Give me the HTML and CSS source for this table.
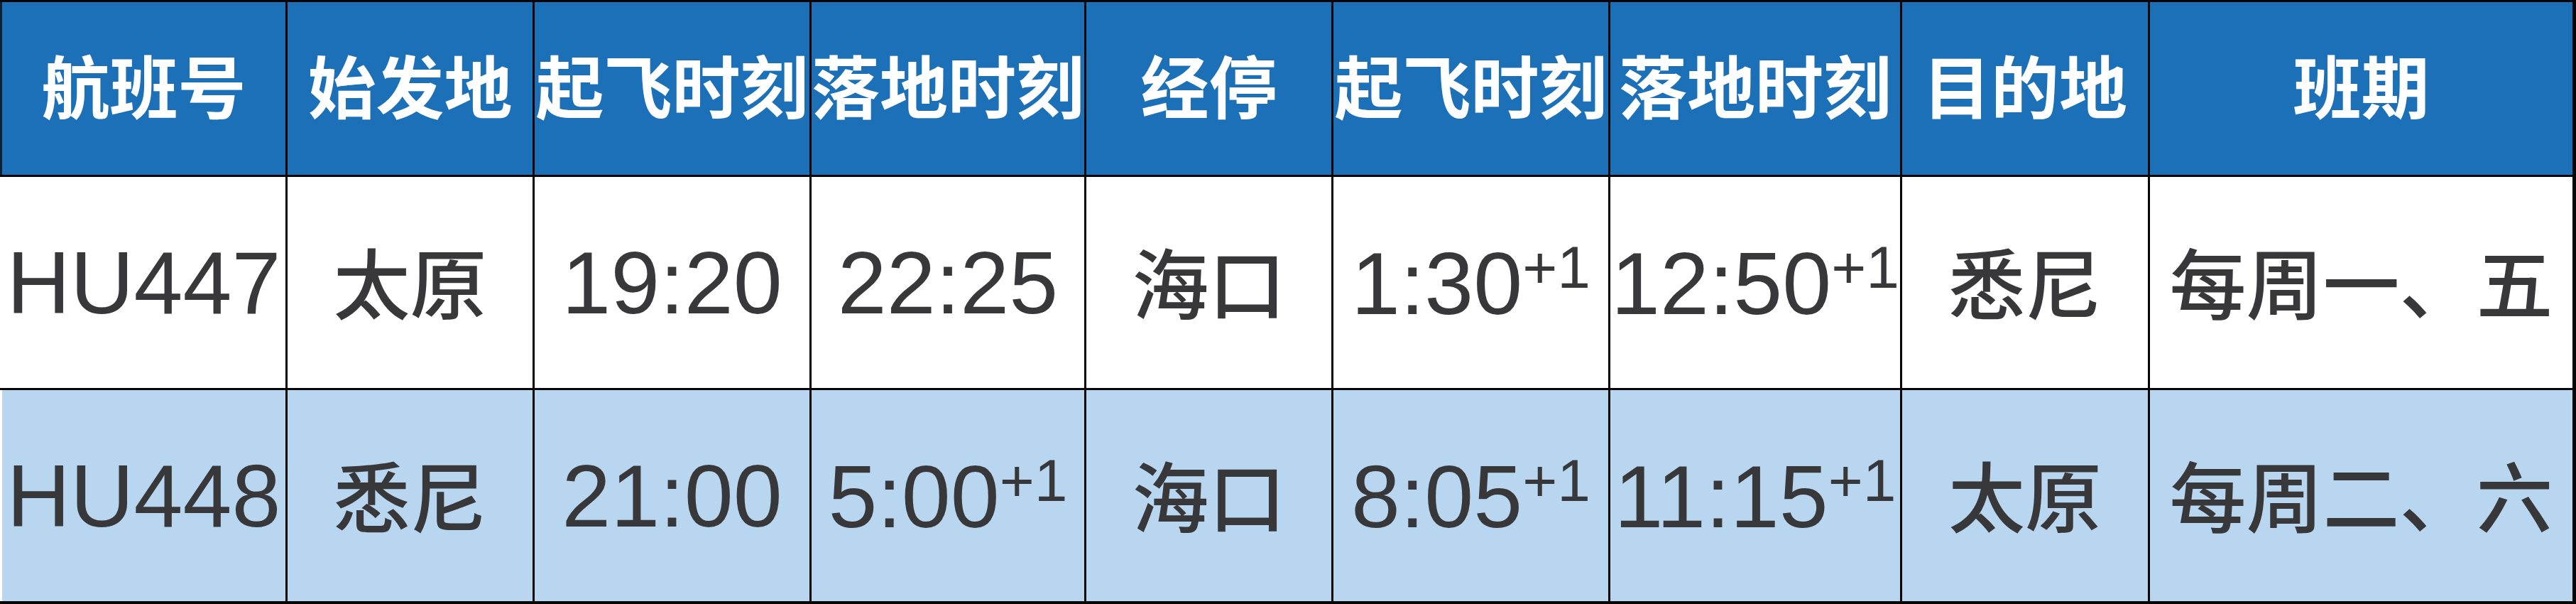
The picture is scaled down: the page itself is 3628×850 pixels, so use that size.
FILE: index.html
```html
<!DOCTYPE html>
<html lang="zh-CN">
<head>
<meta charset="utf-8">
<title>航班时刻表</title>
<link rel="stylesheet" href="styles.css">
</head>
<body>
<div class="schedule">
  <div class="cell head lead">航班号</div>
  <div class="cell head">始发地</div>
  <div class="cell head">起飞时刻</div>
  <div class="cell head">落地时刻</div>
  <div class="cell head">经停</div>
  <div class="cell head">起飞时刻</div>
  <div class="cell head">落地时刻</div>
  <div class="cell head">目的地</div>
  <div class="cell head">班期</div>

  <div class="cell num lead"><span class="val">HU447</span></div>
  <div class="cell zh"><span class="val">太原</span></div>
  <div class="cell num"><span class="val">19:20</span></div>
  <div class="cell num"><span class="val">22:25</span></div>
  <div class="cell zh"><span class="val">海口</span></div>
  <div class="cell num"><span class="val">1:30<span class="plus">+1</span></span></div>
  <div class="cell num"><span class="val">12:50<span class="plus">+1</span></span></div>
  <div class="cell zh"><span class="val">悉尼</span></div>
  <div class="cell zh"><span class="val">每周一、五</span></div>

  <div class="cell num alt lead"><span class="val">HU448</span></div>
  <div class="cell zh alt"><span class="val">悉尼</span></div>
  <div class="cell num alt"><span class="val">21:00</span></div>
  <div class="cell num alt"><span class="val">5:00<span class="plus">+1</span></span></div>
  <div class="cell zh alt"><span class="val">海口</span></div>
  <div class="cell num alt"><span class="val">8:05<span class="plus">+1</span></span></div>
  <div class="cell num alt"><span class="val">11:15<span class="plus">+1</span></span></div>
  <div class="cell zh alt"><span class="val">太原</span></div>
  <div class="cell zh alt"><span class="val">每周二、六</span></div>
</div>
</body>
</html>
```

FILE: styles.css
```css
html, body {
  margin: 0;
  padding: 0;
  background: #ffffff;
}

.schedule {
  box-sizing: border-box;
  width: 3628px;
  height: 850px;
  display: grid;
  grid-template-columns: 402px 345px 387px 384px 345px 387px 408px 346px 595px;
  grid-template-rows: 243px 297px 297px;
  gap: 3px;
  background: #050505;
  border-style: solid;
  border-color: #050505;
  border-width: 3px 5px 4px 0;
}

.cell {
  box-sizing: border-box;
  display: flex;
  align-items: center;
  justify-content: center;
  white-space: nowrap;
  background: #ffffff;
  color: #38383a;
  line-height: 1;
}

.lead {
  border-left: 3px solid #ffffff;
}

.head {
  background: #1c70b8;
  color: #ffffff;
  font-family: "Noto Sans CJK SC", sans-serif;
  font-weight: 700;
  font-size: 96px;
  padding-bottom: 14px;
}

.head.lead {
  border-left-color: #0b1f35;
}

.num {
  font-family: "Liberation Sans", "Noto Sans CJK SC", sans-serif;
  font-weight: 400;
  font-size: 124px;
}

.zh {
  font-family: "Noto Sans CJK SC", sans-serif;
  font-weight: 500;
  font-size: 108px;
  padding-bottom: 8px;
}

.alt {
  background: #b9d6f0;
}

.val {
  display: inline-block;
}

.plus {
  font-size: 84px;
  vertical-align: 37px;
}
```
